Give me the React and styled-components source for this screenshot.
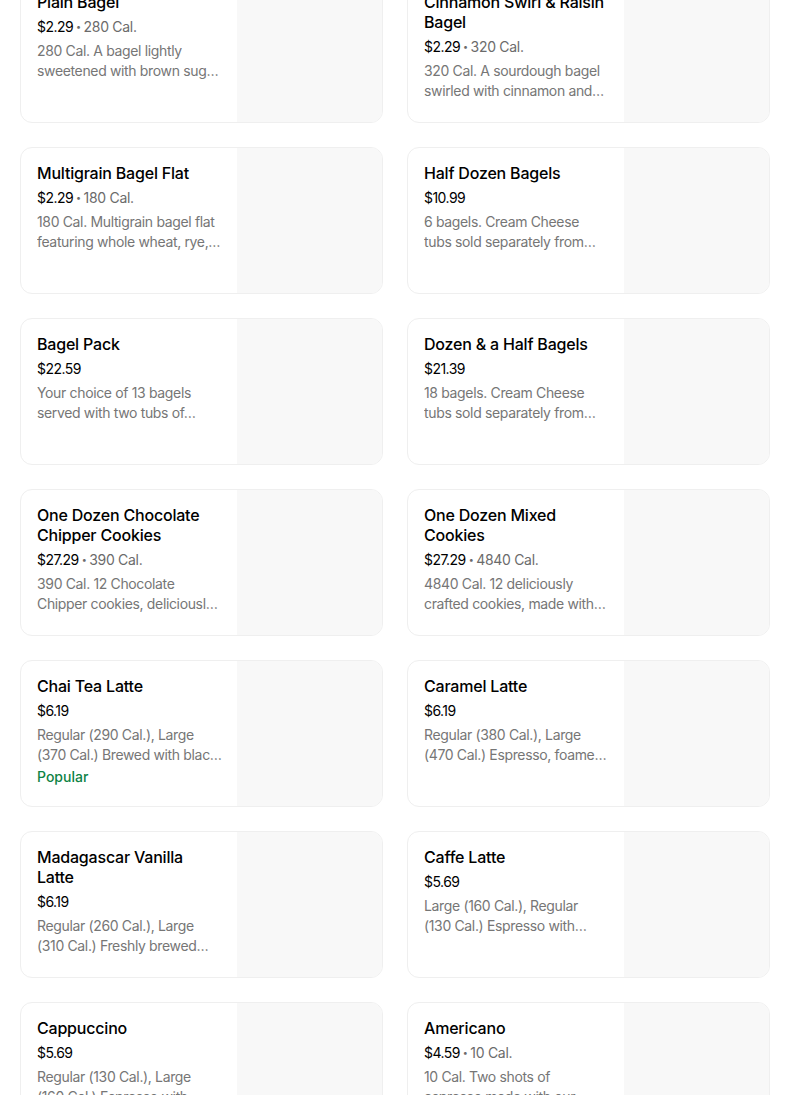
import styled, { createGlobalStyle } from "styled-components";

// desc holds the two visible lines of the clamped description
const items = [
  { name: "Plain Bagel", price: "$2.29", cal: "280 Cal.", desc: ["280 Cal. A bagel lightly", "sweetened with brown sug…"] },
  { name: "Cinnamon Swirl & Raisin Bagel", price: "$2.29", cal: "320 Cal.", desc: ["320 Cal. A sourdough bagel", "swirled with cinnamon and…"] },
  { name: "Multigrain Bagel Flat", price: "$2.29", cal: "180 Cal.", desc: ["180 Cal. Multigrain bagel flat", "featuring whole wheat, rye,…"] },
  { name: "Half Dozen Bagels", price: "$10.99", desc: ["6 bagels. Cream Cheese", "tubs sold separately from…"] },
  { name: "Bagel Pack", price: "$22.59", desc: ["Your choice of 13 bagels", "served with two tubs of…"] },
  { name: "Dozen & a Half Bagels", price: "$21.39", desc: ["18 bagels. Cream Cheese", "tubs sold separately from…"] },
  { name: "One Dozen Chocolate Chipper Cookies", price: "$27.29", cal: "390 Cal.", desc: ["390 Cal. 12 Chocolate", "Chipper cookies, deliciousl…"] },
  { name: "One Dozen Mixed Cookies", price: "$27.29", cal: "4840 Cal.", desc: ["4840 Cal. 12 deliciously", "crafted cookies, made with…"] },
  { name: "Chai Tea Latte", price: "$6.19", desc: ["Regular (290 Cal.), Large", "(370 Cal.) Brewed with blac…"], popular: true },
  { name: "Caramel Latte", price: "$6.19", desc: ["Regular (380 Cal.), Large", "(470 Cal.) Espresso, foame…"] },
  { name: "Madagascar Vanilla Latte", price: "$6.19", desc: ["Regular (260 Cal.), Large", "(310 Cal.) Freshly brewed…"] },
  { name: "Caffe Latte", price: "$5.69", desc: ["Large (160 Cal.), Regular", "(130 Cal.) Espresso with…"] },
  { name: "Cappuccino", price: "$5.69", desc: ["Regular (130 Cal.), Large", "(160 Cal.) Espresso with…"] },
  { name: "Americano", price: "$4.59", cal: "10 Cal.", desc: ["10 Cal. Two shots of", "espresso made with our…"] },
];

const GlobalStyle = createGlobalStyle`
  html, body {
    margin: 0;
    padding: 0;
    background: #fff;
    overflow: hidden;
  }
  body {
    font-family: Inter, "Noto Sans", sans-serif;
    color: #000;
  }
`;

const Grid = styled.div`
  display: grid;
  grid-template-columns: 363px 363px;
  gap: 24px;
  padding: 0 20px;
  margin-top: -24px;
`;

const Card = styled.div`
  display: flex;
  height: 147px;
  box-sizing: border-box;
  border: 1px solid #efefef;
  border-radius: 12px;
  overflow: hidden;
  background: #fff;
`;

const Info = styled.div`
  flex: 1;
  min-width: 0;
  padding: 15px 12px 16px 16px;
`;

const Title = styled.div`
  padding-right: 4px;
  font-size: 16px;
  line-height: 20px;
  font-weight: 500;
  color: #000;
  letter-spacing: -0.2px;
`;

const Price = styled.div`
  margin-top: 5px;
  font-size: 14px;
  line-height: 20px;
  color: #000;
  letter-spacing: -0.55px;
`;

const Dot = styled.span`
  display: inline-block;
  margin: 0 3px;
  font-size: 9px;
  vertical-align: 2px;
  color: #6b6b6b;
`;

const Cal = styled.span`
  color: #6b6b6b;
  letter-spacing: -0.3px;
`;

const Desc = styled.div`
  margin-top: 4px;
  font-size: 14px;
  line-height: 20px;
  color: #767676;
  letter-spacing: -0.35px;
`;

const DescLine = styled.div`
  white-space: nowrap;
  overflow: hidden;
  text-overflow: ellipsis;
`;

const Badge = styled.div`
  margin-top: 2px;
  font-size: 14px;
  line-height: 20px;
  font-weight: 500;
  color: #0e8345;
`;

const Thumb = styled.div`
  flex: 0 0 145px;
  background: #f8f8f8;
`;

const ItemCard = ({ item }) => (
  <Card>
    <Info>
      <Title>{item.name}</Title>
      <Price>
        {item.price}
        {item.cal && (
          <>
            <Dot>•</Dot>
            <Cal>{item.cal}</Cal>
          </>
        )}
      </Price>
      <Desc>
        {item.desc.map((line) => (
          <DescLine key={line}>{line}</DescLine>
        ))}
      </Desc>
      {item.popular && <Badge>Popular</Badge>}
    </Info>
    <Thumb />
  </Card>
);

export default function App() {
  return (
    <>
      <GlobalStyle />
      <Grid>
        {items.map((item) => (
          <ItemCard key={item.name} item={item} />
        ))}
      </Grid>
    </>
  );
}
